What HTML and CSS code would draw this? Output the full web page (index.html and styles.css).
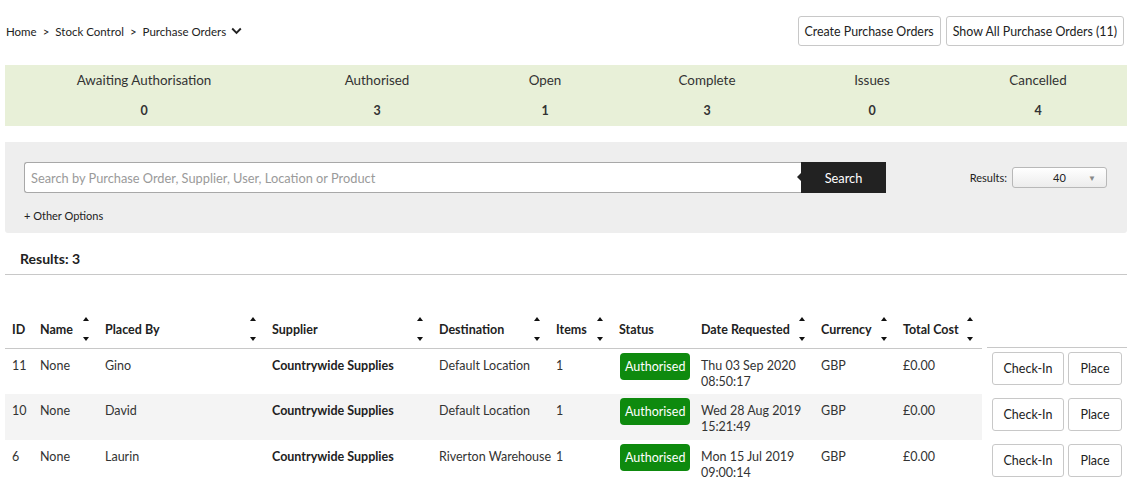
FILE: index.html
```html
<!DOCTYPE html>
<html lang="en">
<head>
<meta charset="utf-8">
<title>Purchase Orders</title>
<link rel="stylesheet" href="styles.css">
</head>
<body>
<header class="topbar">
  <nav class="crumbs">
    <span>Home</span><span class="sep">&gt;</span>
    <span>Stock Control</span><span class="sep">&gt;</span>
    <span>Purchase Orders</span>
    <svg class="chev" width="11" height="8" viewBox="0 0 11 8"><path d="M1.2 1.5 L5.5 5.8 L9.8 1.5" fill="none" stroke="#222" stroke-width="1.9"/></svg>
  </nav>
  <div class="top-actions">
    <button class="btn">Create Purchase Orders</button>
    <button class="btn">Show All Purchase Orders (11)</button>
  </div>
</header>

<section class="summary">
  <div class="stat"><div class="label">Awaiting Authorisation</div><div class="num">0</div></div>
  <div class="stat"><div class="label">Authorised</div><div class="num">3</div></div>
  <div class="stat"><div class="label">Open</div><div class="num">1</div></div>
  <div class="stat"><div class="label">Complete</div><div class="num">3</div></div>
  <div class="stat"><div class="label">Issues</div><div class="num">0</div></div>
  <div class="stat"><div class="label">Cancelled</div><div class="num">4</div></div>
</section>

<section class="search-panel">
  <div class="search-row">
    <div class="search-group">
      <input class="search-input" type="text" placeholder="Search by Purchase Order, Supplier, User, Location or Product">
      <button class="search-btn">Search</button>
    </div>
    <div class="results-select">
      <span>Results:</span>
      <div class="select"><span class="val">40</span><span class="arr">&#9660;</span></div>
    </div>
  </div>
  <div class="other">+ Other Options</div>
</section>

<h2 class="results-title">Results: 3</h2>

<table class="orders">
  <colgroup>
    <col style="width:28px"><col style="width:65px"><col style="width:167px"><col style="width:167px"><col style="width:117px"><col style="width:63px"><col style="width:82px"><col style="width:120px"><col style="width:82px"><col style="width:86px"><col style="width:145px">
  </colgroup>
  <thead>
    <tr>
      <th>ID</th>
      <th><div class="th-in"><span>Name</span><span class="sort"><i class="up"></i><i class="down"></i></span></div></th>
      <th><div class="th-in"><span>Placed By</span><span class="sort"><i class="up"></i><i class="down"></i></span></div></th>
      <th><div class="th-in"><span>Supplier</span><span class="sort"><i class="up"></i><i class="down"></i></span></div></th>
      <th><div class="th-in"><span>Destination</span><span class="sort"><i class="up"></i><i class="down"></i></span></div></th>
      <th><div class="th-in"><span>Items</span><span class="sort"><i class="up"></i><i class="down"></i></span></div></th>
      <th>Status</th>
      <th><div class="th-in"><span>Date Requested</span><span class="sort"><i class="up"></i><i class="down"></i></span></div></th>
      <th><div class="th-in"><span>Currency</span><span class="sort"><i class="up"></i><i class="down"></i></span></div></th>
      <th><div class="th-in"><span>Total Cost</span><span class="sort"><i class="up"></i><i class="down"></i></span></div></th>
      <th class="act-h"></th>
    </tr>
  </thead>
  <tbody>
    <tr>
      <td>11</td><td>None</td><td>Gino</td><td class="b">Countrywide Supplies</td><td>Default Location</td><td>1</td>
      <td class="st"><span class="badge">Authorised</span></td>
      <td>Thu 03 Sep 2020<br>08:50:17</td><td>GBP</td><td>£0.00</td>
      <td class="act"><button class="btn rb chk">Check-In</button><button class="btn rb plc">Place</button></td>
    </tr>
    <tr class="alt">
      <td>10</td><td>None</td><td>David</td><td class="b">Countrywide Supplies</td><td>Default Location</td><td>1</td>
      <td class="st"><span class="badge">Authorised</span></td>
      <td>Wed 28 Aug 2019<br>15:21:49</td><td>GBP</td><td>£0.00</td>
      <td class="act"><button class="btn rb chk">Check-In</button><button class="btn rb plc">Place</button></td>
    </tr>
    <tr>
      <td>6</td><td>None</td><td>Laurin</td><td class="b">Countrywide Supplies</td><td>Riverton Warehouse</td><td>1</td>
      <td class="st"><span class="badge">Authorised</span></td>
      <td>Mon 15 Jul 2019<br>09:00:14</td><td>GBP</td><td>£0.00</td>
      <td class="act"><button class="btn rb chk">Check-In</button><button class="btn rb plc">Place</button></td>
    </tr>
  </tbody>
</table>
</body>
</html>
```

FILE: styles.css
```css
* { box-sizing: border-box; }
body {
  margin: 0;
  font-family: Lato, "Liberation Sans", sans-serif;
  font-size: 12.5px;
  color: #222;
  background: #fff;
}
.topbar {
  display: flex;
  justify-content: space-between;
  align-items: center;
  padding: 16px 11px 0 6px;
  height: 46px;
}
.crumbs {
  display: flex;
  align-items: center;
  font-size: 11.5px;
}
.crumbs .sep { margin: 0 6px; }
.crumbs .chev { margin-left: 5px; }
.top-actions { display: flex; gap: 5px; }
.btn {
  font-family: inherit;
  font-size: 12.4px;
  color: #222;
  background: #fff;
  border: 1px solid #c8c8c8;
  border-radius: 3px;
  height: 30px;
  padding: 0 6px;
  cursor: pointer;
}
.summary {
  display: grid;
  grid-template-columns: 278px 188px 148px 176px 154px 178px;
  margin: 19px 8px 0 5px;
  background: #e8f0d8;
  padding: 6px 0;
  text-align: center;
}
.stat .label { font-size: 13.4px; line-height: 18px; color: #333; }
.stat .num { font-size: 12.5px; font-weight: 700; line-height: 18px; margin-top: 13px; color: #333; }
.search-panel {
  margin: 16px 8px 0 5px;
  background: #eeeeee;
  border-radius: 0 0 3px 3px;
  padding: 20px 20px 9px 19px;
  height: 91px;
}
.search-row {
  display: flex;
  justify-content: space-between;
  align-items: center;
}
.search-group { display: flex; width: 862px; height: 31px; }
.search-input {
  flex: 1;
  height: 31px;
  border: 1px solid #a8a8a8;
  border-right: none;
  border-radius: 3px 0 0 3px;
  padding: 0 6px;
  font-family: inherit;
  font-size: 12.8px;
  color: #222;
  background: #fff;
}
.search-input::placeholder { color: #9a9a9a; }
.search-btn {
  position: relative;
  width: 85px;
  height: 31px;
  border: none;
  background: #222;
  color: #fff;
  font-family: inherit;
  font-size: 12.8px;
}
.search-btn::before {
  content: "";
  position: absolute;
  left: -4px;
  top: 11px;
  border-right: 4px solid #222;
  border-top: 4px solid transparent;
  border-bottom: 4px solid transparent;
}
.results-select {
  display: flex;
  align-items: center;
  gap: 5px;
  font-size: 11px;
}
.select {
  position: relative;
  width: 95px;
  height: 21px;
  border: 1px solid #b8b8b8;
  border-radius: 3px;
  background: linear-gradient(#fff, #ececec);
  display: flex;
  align-items: center;
  justify-content: center;
  font-size: 11px;
}
.select .arr {
  position: absolute;
  right: 10px;
  top: 5px;
  font-size: 8px;
  color: #888;
}
.other { font-size: 11px; margin-top: 15px; line-height: 16px; }
.results-title {
  margin: 0 8px 0 5px;
  padding: 17px 0 6px 15px;
  font-size: 14px;
  font-weight: 700;
  line-height: 18px;
  border-bottom: 1px solid #c8c8c8;
}
.orders {
  margin: 36px 8px 0 5px;
  border-collapse: collapse;
  table-layout: fixed;
  width: 1122px;
}
.orders th {
  height: 37px;
  padding: 0 8px 0 7px;
  text-align: left;
  font-weight: 700;
  font-size: 12.5px;
  vertical-align: middle;
  border-bottom: 1px solid #c8c8c8;
}
.orders th.act-h {
  border-bottom: none;
  background: linear-gradient(#c8c8c8, #c8c8c8) no-repeat right bottom / calc(100% - 5px) 1px;
}
.th-in { display: flex; justify-content: space-between; align-items: center; }
.sort {
  display: flex;
  flex-direction: column;
  justify-content: space-between;
  height: 24px;
  width: 7px;
}
.sort i { display: block; width: 0; height: 0; border-left: 3.5px solid transparent; border-right: 3.5px solid transparent; }
.sort .up { border-bottom: 4px solid #111; }
.sort .down { border-top: 4px solid #111; }
.orders tbody tr { height: 46px; }
.orders td {
  padding: 9px 7px 0;
  vertical-align: top;
  line-height: 16px;
  font-size: 12.5px;
  color: #333;
  white-space: nowrap;
}
.orders td.b { font-weight: 700; color: #222; }
.orders tr.alt td { background: #f4f4f4; }
.orders tr.alt td.act { background: #fff; }
.orders td.st { padding: 4px 0 0 8px; }
.badge {
  display: inline-block;
  height: 27px;
  line-height: 27px;
  padding: 0 5px;
  background: #0e8a0e;
  color: #fff;
  border-radius: 4px;
  font-size: 12.5px;
}
.orders td.act { padding: 4px 5px 0 10px; }
.rb { height: 33px; vertical-align: top; font-size: 12.5px; }
.chk { width: 72px; }
.plc { width: 54px; margin-left: 4px; }
```
